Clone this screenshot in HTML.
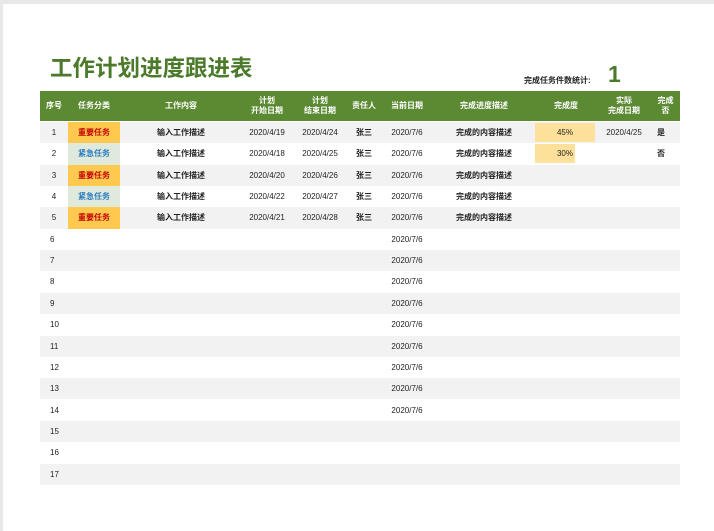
<!DOCTYPE html>
<html><head><meta charset="utf-8"><style>
*{margin:0;padding:0;box-sizing:border-box}
body{width:714px;height:531px;background:#fff;position:relative;overflow:hidden;font-family:"Liberation Sans","Noto Sans CJK SC",sans-serif;color:#222}
.frame{position:absolute;left:0;top:0;width:714px;height:531px;border-top:4px solid #e8e8e8;border-left:3px solid #e8e8e8}
.title{position:absolute;left:50px;top:51px;font-size:22.5px;font-weight:bold;color:#4b7a2b}
.cnt{position:absolute;left:524px;top:75px;font-size:8px;font-weight:bold}
.one{position:absolute;left:608px;top:61px;font-size:23px;font-weight:bold;color:#4b7a2b}
.hdr{position:absolute;left:40px;top:91px;width:640px;height:30px;background:#5b8a33}
.c{position:absolute;font-size:8px;text-align:center;line-height:10px;white-space:nowrap}
.h{color:#fff;font-weight:bold}
.row{position:absolute;left:40px;width:640px;height:21.3px}
.g{background:#f2f2f2}
</style></head><body>
<div class="frame"></div>
<div class="title">工作计划进度跟进表</div>
<div class="cnt">完成任务件数统计:</div>
<div class="one">1</div>
<div class="hdr"></div>
<div id="t"></div>
<script>
var H=[[40,28,"序号"],[68,52,"任务分类"],[120,122,"工作内容"],[240,54,"计划<br>开始日期"],[294,52,"计划<br>结束日期"],[346,36,"责任人"],[382,50,"当前日期"],[432,104,"完成进度描述"],[536,60,"完成度"],[597,54,"实际<br>完成日期"],[651,29,"完成<br>否"]];
var s="";
H.forEach(function(h){var two=h[2].indexOf("<br>")>0;s+='<div class="c h" style="left:'+h[0]+'px;width:'+h[1]+'px;top:'+(two?96:101)+'px">'+h[2]+'</div>';});
var d=[["重要任务","2020/4/19","2020/4/24",45,"2020/4/25","是"],["紧急任务","2020/4/18","2020/4/25",30,"","否"],["重要任务","2020/4/20","2020/4/26"],["紧急任务","2020/4/22","2020/4/27"],["重要任务","2020/4/21","2020/4/28"]];
for(var i=0;i<17;i++){var y=122+i*21.35;var ty=y+6;
 s+='<div class="row'+(i%2==0?' g':'')+'" style="top:'+y+'px"></div>';
 if(i<5){var r=d[i];var imp=r[0]=="重要任务";
  s+='<div style="position:absolute;left:68px;width:52px;top:'+y+'px;height:21.3px;background:'+(imp?'#ffc94f':'#dfeadd')+'"></div>';
  s+='<div class="c" style="left:40px;width:28px;top:'+ty+'px">'+(i+1)+'</div>';
  s+='<div class="c" style="left:68px;width:52px;top:'+ty+'px;font-weight:bold;color:'+(imp?'#c00000':'#2a7ac0')+'">'+r[0]+'</div>';
  s+='<div class="c" style="left:120px;width:122px;top:'+ty+'px;font-weight:bold">输入工作描述</div>';
  s+='<div class="c" style="left:240px;width:54px;top:'+ty+'px">'+r[1]+'</div>';
  s+='<div class="c" style="left:294px;width:52px;top:'+ty+'px">'+r[2]+'</div>';
  s+='<div class="c" style="left:346px;width:36px;top:'+ty+'px;font-weight:bold">张三</div>';
  s+='<div class="c" style="left:432px;width:104px;top:'+ty+'px;font-weight:bold">完成的内容描述</div>';
  if(r[3]){var w=r[3]==45?60:40;s+='<div style="position:absolute;left:535px;width:'+w+'px;top:'+(y+1)+'px;height:19px;background:#fde09a"></div><div class="c" style="left:535px;width:60px;top:'+ty+'px">'+r[3]+'%</div>';
   s+='<div class="c" style="left:597px;width:54px;top:'+ty+'px">'+r[4]+'</div><div class="c" style="left:651px;width:20px;top:'+ty+'px;font-weight:bold">'+r[5]+'</div>';}
 } else {
  s+='<div class="c" style="left:50px;top:'+ty+'px;text-align:left">'+(i+1)+'</div>';
  if(i<14)s+='<div class="c" style="left:382px;width:50px;top:'+ty+'px">2020/7/6</div>';
 }
 if(i<5)s+='<div class="c" style="left:382px;width:50px;top:'+ty+'px">2020/7/6</div>';
}
document.getElementById("t").innerHTML=s;
</script>
</body></html>
